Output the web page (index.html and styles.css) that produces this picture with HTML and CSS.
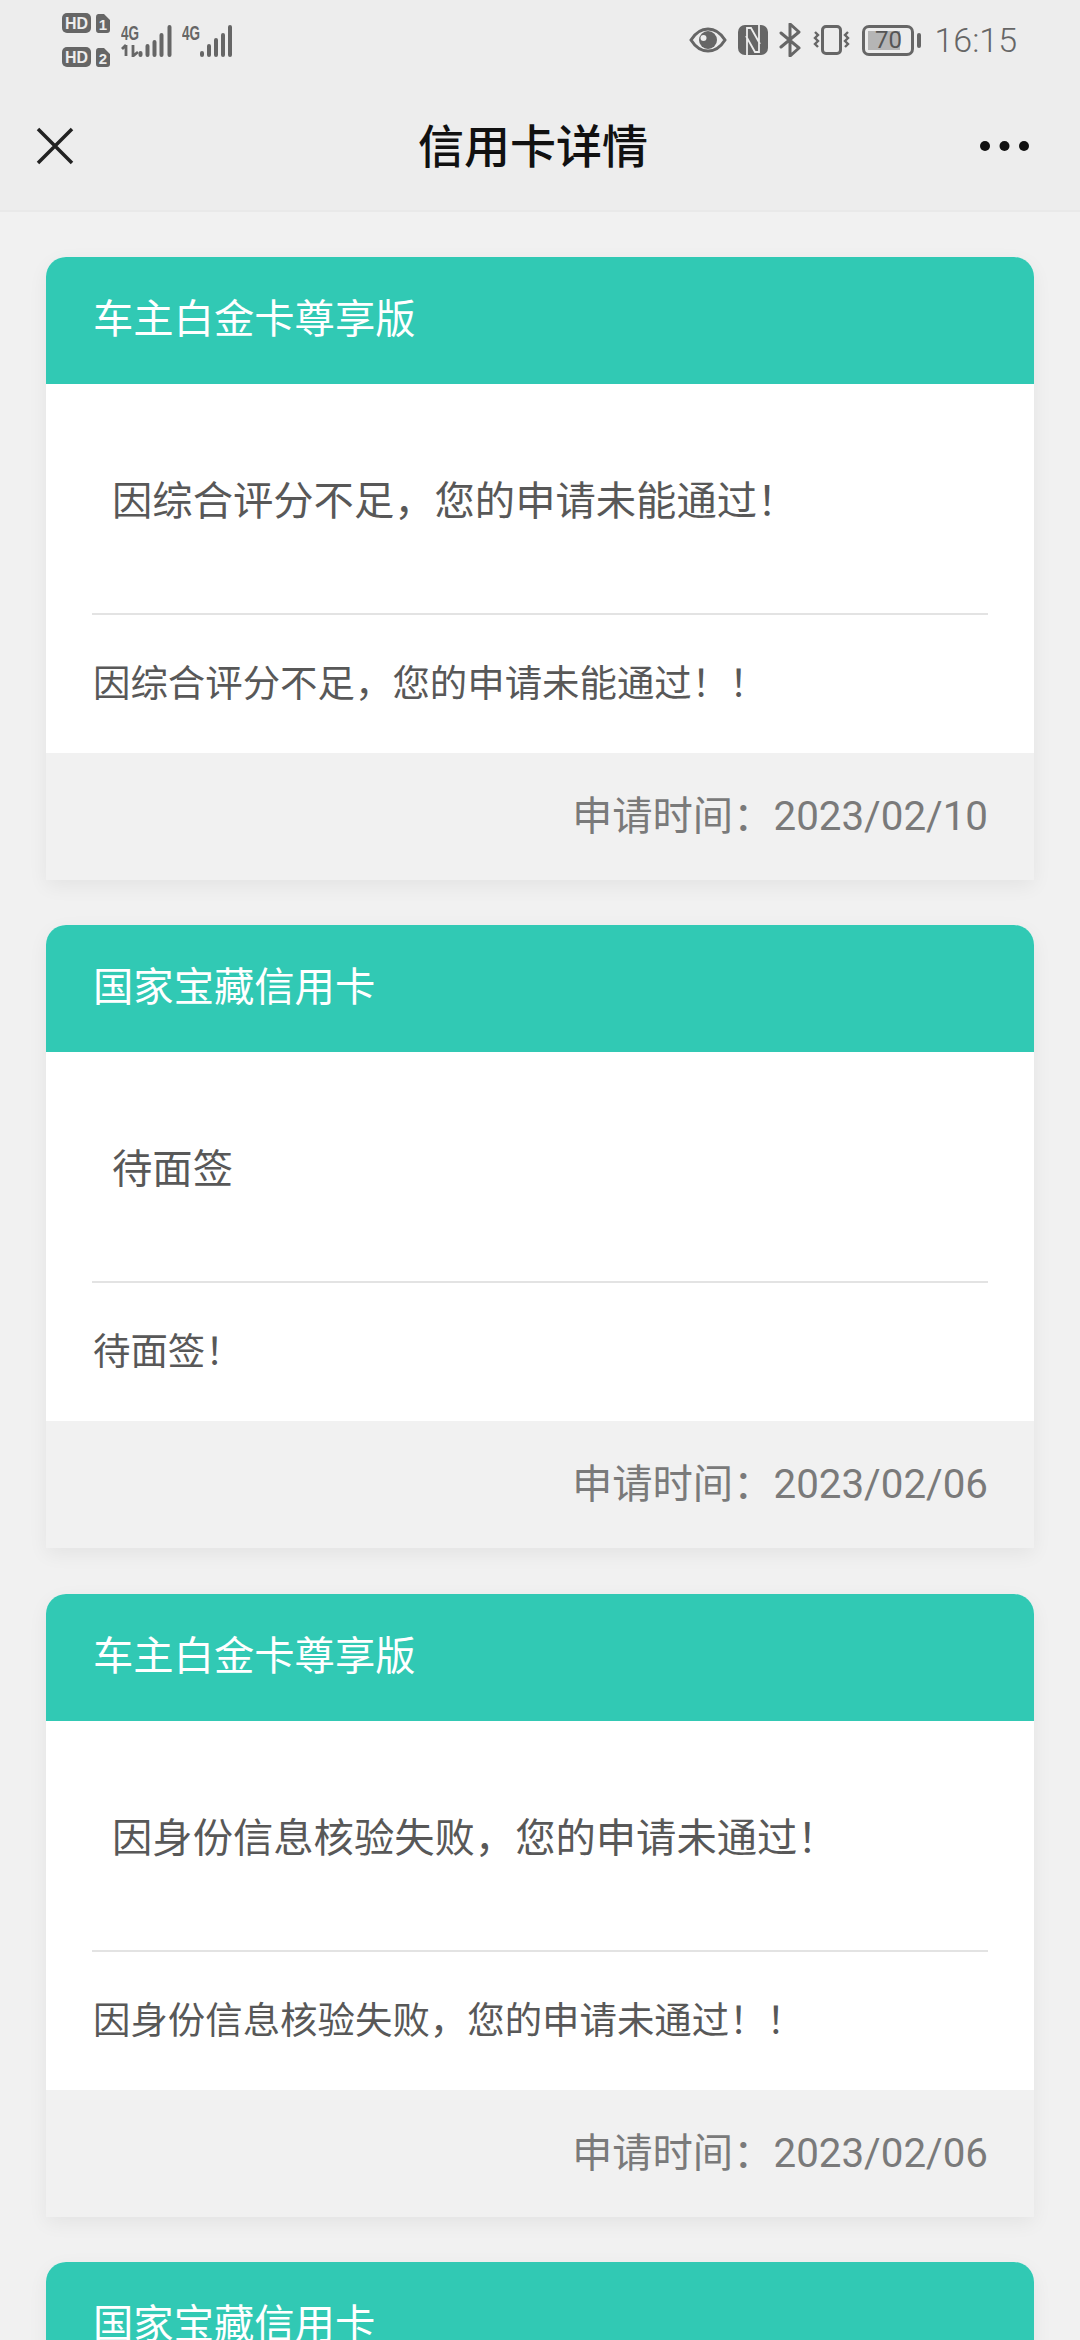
FILE: index.html
```html
<!DOCTYPE html>
<html lang="zh-CN">
<head>
<meta charset="UTF-8">
<meta name="viewport" content="width=device-width, initial-scale=1.0">
<title>信用卡详情</title>
<link rel="stylesheet" href="styles.css">
</head>
<body>
<div class="top">
    <div class="status">
        <div class="status-left">
            <svg class="ico-hd" width="48" height="54" viewBox="0 0 48 54">
                <rect x="0" y="0" width="29" height="20" rx="5" fill="#666"/>
                <text x="14.5" y="16" class="ico-text" font-size="17" textLength="23" lengthAdjust="spacingAndGlyphs" text-anchor="middle" fill="#ededed">HD</text>
                <path d="M36 1h6l6 6v10a3 3 0 0 1-3 3h-9a3 3 0 0 1-2-3V4a3 3 0 0 1 2-3z" fill="#666"/>
                <text x="41" y="16.500" class="ico-text" font-size="15" text-anchor="middle" fill="#ededed">1</text>
                <rect x="0" y="34" width="29" height="20" rx="5" fill="#666"/>
                <text x="14.5" y="50" class="ico-text" font-size="17" textLength="23" lengthAdjust="spacingAndGlyphs" text-anchor="middle" fill="#ededed">HD</text>
                <path d="M36 35h6l6 6v10a3 3 0 0 1-3 3h-9a3 3 0 0 1-2-3V38a3 3 0 0 1 2-3z" fill="#666"/>
                <text x="41" y="50.500" class="ico-text" font-size="15" text-anchor="middle" fill="#ededed">2</text>
            </svg>
            <svg class="ico-signal" width="51" height="40" viewBox="0 -8 51 40">
                <text x="0" y="15" class="ico-text" font-size="20" textLength="18" lengthAdjust="spacingAndGlyphs" fill="#666">4G</text>
                <path d="M5 20v11M1 24l4-4M12 20v11l5-4" fill="none" stroke="#666" stroke-width="2.8"/>
                <g stroke="#666" stroke-width="4" stroke-linecap="round">
                    <path d="M20 30v-2M27 30v-9M34 30v-13M41 30v-20M49 30V2" transform="translate(-.5 0)"/>
                </g>
            </svg>
            <svg class="ico-signal-2" width="51" height="40" viewBox="0 -8 51 40">
                <text x="0" y="15" class="ico-text" font-size="20" textLength="18" lengthAdjust="spacingAndGlyphs" fill="#666">4G</text>
                <g stroke="#666" stroke-width="4" stroke-linecap="round">
                    <path d="M20 30v-2M27 30v-9M34 30v-15M41 30v-20M48 30V2"/>
                </g>
            </svg>
        </div>
        <div class="status-right">
            <svg width="38" height="26" viewBox="0 0 38 26">
                <path d="M2 13C7 5 12 2 19 2s12 3 17 11c-5 8-10 11-17 11S7 21 2 13z" fill="none" stroke="#666" stroke-width="3"/>
                <circle cx="19" cy="13" r="9" fill="#666"/>
                <circle cx="14.5" cy="11" r="3" fill="#ededed"/>
            </svg>
            <svg width="30" height="30" viewBox="0 0 30 30">
                <rect x="0" y="0" width="30" height="30" rx="7" fill="#666"/>
                <path d="M9 30V3h4l9 16M21 0v27h-4L8 11" fill="none" stroke="#ededed" stroke-width="1.8"/>
            </svg>
            <svg width="22" height="34" viewBox="0 0 22 34">
                <path d="M2 10l18 15-9 8V1l9 8L2 24" fill="none" stroke="#666" stroke-width="3" stroke-linejoin="round" stroke-linecap="round"/>
            </svg>
            <svg width="39" height="30" viewBox="0 0 39 30">
                <rect x="10.5" y="1.5" width="18" height="27" rx="3.5" fill="none" stroke="#666" stroke-width="3"/>
                <path d="M3 7l3 3-3 3 3 3-3 3 3 3M36 7l-3 3 3 3-3 3 3 3-3 3" fill="none" stroke="#666" stroke-width="2.4"/>
            </svg>
            <div class="battery">
                <div class="battery-body">
                    <div class="battery-fill"></div>
                    <span class="battery-num">70</span>
                </div>
                <div class="battery-cap"></div>
            </div>
            <span class="clock">16:15</span>
        </div>
    </div>
    <div class="nav">
        <svg class="nav-close" width="38" height="38" viewBox="0 0 38 38">
            <path d="M2 2l34 34M36 2L2 36" fill="none" stroke="#222" stroke-width="3.5"/>
        </svg>
        <h1 class="nav-title">信用卡详情</h1>
        <svg class="nav-more" width="49" height="10" viewBox="0 0 49 10">
            <circle cx="5" cy="5" r="5" fill="#111"/>
            <circle cx="24.500" cy="5" r="5" fill="#111"/>
            <circle cx="44" cy="5" r="5" fill="#111"/>
        </svg>
    </div>
</div>

<div class="list">
    <div class="card">
        <div class="card-head">车主白金卡尊享版</div>
        <div class="card-body">
            <div class="card-msg">因综合评分不足，您的申请未能通过！</div>
            <div class="card-note">因综合评分不足，您的申请未能通过！！</div>
        </div>
        <div class="card-foot">申请时间：2023/02/10</div>
    </div>
    <div class="card">
        <div class="card-head">国家宝藏信用卡</div>
        <div class="card-body">
            <div class="card-msg">待面签</div>
            <div class="card-note">待面签！</div>
        </div>
        <div class="card-foot">申请时间：2023/02/06</div>
    </div>
    <div class="card">
        <div class="card-head">车主白金卡尊享版</div>
        <div class="card-body">
            <div class="card-msg">因身份信息核验失败，您的申请未通过！</div>
            <div class="card-note">因身份信息核验失败，您的申请未通过！！</div>
        </div>
        <div class="card-foot">申请时间：2023/02/06</div>
    </div>
    <div class="card">
        <div class="card-head">国家宝藏信用卡</div>
    </div>
</div>
</body>
</html>
```

FILE: styles.css
```css
html, body {
    height: 2340px;
    overflow: hidden;
}

body {
    margin: 0;
    padding: 0;
    background-color: #f1f1f1;
    font-family: Roboto, "Noto Sans CJK SC", sans-serif;
}

.top {
    height: 212px;
    box-sizing: border-box;
    border-bottom: 2px solid #e9e9e9;
    background-color: #ededed;
}

.status {
    height: 84px;
    display: flex;
    justify-content: space-between;
    padding: 13px 63px 0 62px;
    box-sizing: border-box;
}

.status-left {
    display: flex;
    align-items: flex-start;
}

.ico-text {
    font-family: "Liberation Sans", sans-serif;
    font-weight: bold;
}

.ico-signal {
    margin: 4px 0 0 11px;
}

.ico-signal-2 {
    margin: 4px 0 0 10px;
}

.status-right {
    display: flex;
    align-items: center;
    gap: 11px;
    height: 54px;
    color: #666;
}

.battery {
    display: flex;
    align-items: center;
    gap: 3px;
}

.battery-body {
    position: relative;
    width: 52px;
    height: 31px;
    border: 3px solid #666;
    border-radius: 7px;
    box-sizing: border-box;
    display: flex;
    align-items: center;
    justify-content: center;
}

.battery-fill {
    position: absolute;
    left: 3px;
    top: 3px;
    bottom: 3px;
    width: 32px;
    background-color: #b5b5b5;
}

.battery-num {
    position: relative;
    font-size: 24px;
    line-height: 1;
    color: #555;
}

.battery-cap {
    width: 4px;
    height: 15px;
    border-radius: 2px;
    background-color: #666;
}

.clock {
    margin-left: 2px;
    font-size: 34px;
    font-weight: 300;
    color: #666;
}

.nav {
    height: 126px;
    display: flex;
    align-items: center;
    justify-content: space-between;
    padding: 0 51px 2px 36px;
    box-sizing: border-box;
}

.nav-title {
    margin: 0 0 6px 12px;
    font-size: 46px;
    font-weight: 500;
    color: #111;
}

.list {
    padding: 45px 46px 0;
}

.card {
    margin-bottom: 45.4px;
    border-radius: 20px 20px 0 0;
    background-color: white;
    box-shadow: 0px 6px 20px rgba(0, 0, 0, 0.06);
}

.card-head {
    height: 127px;
    padding-left: 47px;
    border-radius: 20px 20px 0 0;
    background-color: #31c9b4;
    color: white;
    font-size: 40.32px;
    line-height: 126px;
}

.card-body {
    height: 369px;
    padding: 0 46px;
    box-sizing: border-box;
}

.card-msg {
    height: 231px;
    padding: 84px 0 0 20px;
    box-sizing: border-box;
    border-bottom: 2px solid #e3e3e3;
    color: #585858;
    font-size: 40.32px;
    line-height: 68px;
}

.card-note {
    padding-left: 1px;
    color: #585858;
    font-size: 37.44px;
    line-height: 139px;
}

.card-foot {
    height: 127px;
    padding-right: 46px;
    background-color: #f1f1f1;
    color: #7a7a7a;
    font-size: 40.32px;
    line-height: 127px;
    text-align: right;
}
```
